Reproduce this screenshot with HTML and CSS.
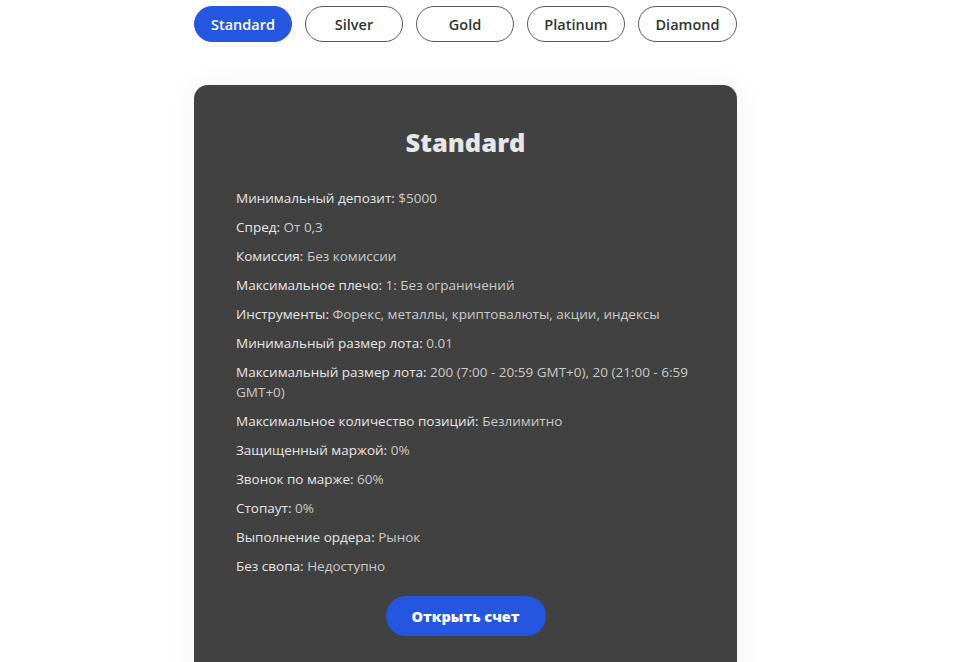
FILE: index.html
```html
<!DOCTYPE html>
<html lang="ru">
<head>
  <meta charset="UTF-8">
  <meta name="viewport" content="width=device-width, initial-scale=1.0">
  <title>Типы счетов</title>
  <link rel="stylesheet" href="styles.css">
</head>
<body>
  <div class="accounts">
    <div class="tabs">
      <button class="tab active">Standard</button>
      <button class="tab">Silver</button>
      <button class="tab">Gold</button>
      <button class="tab">Platinum</button>
      <button class="tab">Diamond</button>
    </div>

    <div class="card">
      <h2 class="card-title">Standard</h2>
      <ul class="specs">
        <li><b>Минимальный депозит:</b> $5000</li>
        <li><b>Спред:</b> От 0,3</li>
        <li><b>Комиссия:</b> Без комиссии</li>
        <li><b>Максимальное плечо:</b> 1: Без ограничений</li>
        <li><b>Инструменты:</b> Форекс, металлы, криптовалюты, акции, индексы</li>
        <li><b>Минимальный размер лота:</b> 0.01</li>
        <li><b>Максимальный размер лота:</b> 200 (7:00 - 20:59 GMT+0), 20 (21:00 - 6:59 GMT+0)</li>
        <li><b>Максимальное количество позиций:</b> Безлимитно</li>
        <li><b>Защищенный маржой:</b> 0%</li>
        <li><b>Звонок по марже:</b> 60%</li>
        <li><b>Стопаут:</b> 0%</li>
        <li><b>Выполнение ордера:</b> Рынок</li>
        <li><b>Без свопа:</b> Недоступно</li>
      </ul>
      <div class="card-action">
        <button class="open-btn">Открыть счет</button>
      </div>
    </div>
  </div>
</body>
</html>
```

FILE: styles.css
```css
* {
  box-sizing: border-box;
  margin: 0;
  padding: 0;
  font-family: 'Open Sans', 'Noto Sans', sans-serif;
}

body {
  background-color: #fff;
  color: #333;
  overflow: hidden;
}

.accounts {
  width: 543px;
  margin-left: 194px;
  padding-top: 6px;
}

.tabs {
  display: flex;
  gap: 13px;
}

.tab {
  width: 98px;
  height: 36px;
  border: 1px solid #5a5a5a;
  border-radius: 18px;
  background-color: #fff;
  color: #333;
  font-size: 14.5px;
  font-weight: 600;
  cursor: pointer;
}

.tab:last-child {
  width: 99px;
}

.tab.active {
  background-color: #2456e0;
  border-color: #2456e0;
  color: #fff;
}

.card {
  margin-top: 43px;
  background-color: #414141;
  border-radius: 14px;
  padding: 40px 42px 24px;
  box-shadow: 0 0 30px rgba(0, 0, 0, 0.06);
  height: 640px;
}

.card-title {
  text-align: center;
  font-size: 25.5px;
  font-weight: 800;
  color: #e6e6e6;
  line-height: 34px;
  margin-bottom: 29px;
}

.specs {
  list-style: none;
}

.specs li {
  font-size: 13.5px;
  line-height: 20px;
  color: #cacaca;
  margin-bottom: 9px;
}

.specs li b {
  font-weight: 500;
  color: #e6e6e6;
}

.card-action {
  display: flex;
  justify-content: center;
  margin-top: 20px;
}

.open-btn {
  width: 160px;
  height: 40px;
  border: none;
  border-radius: 20px;
  background-color: #2456e0;
  color: #fff;
  font-size: 14.5px;
  font-weight: 800;
  cursor: pointer;
}
```
